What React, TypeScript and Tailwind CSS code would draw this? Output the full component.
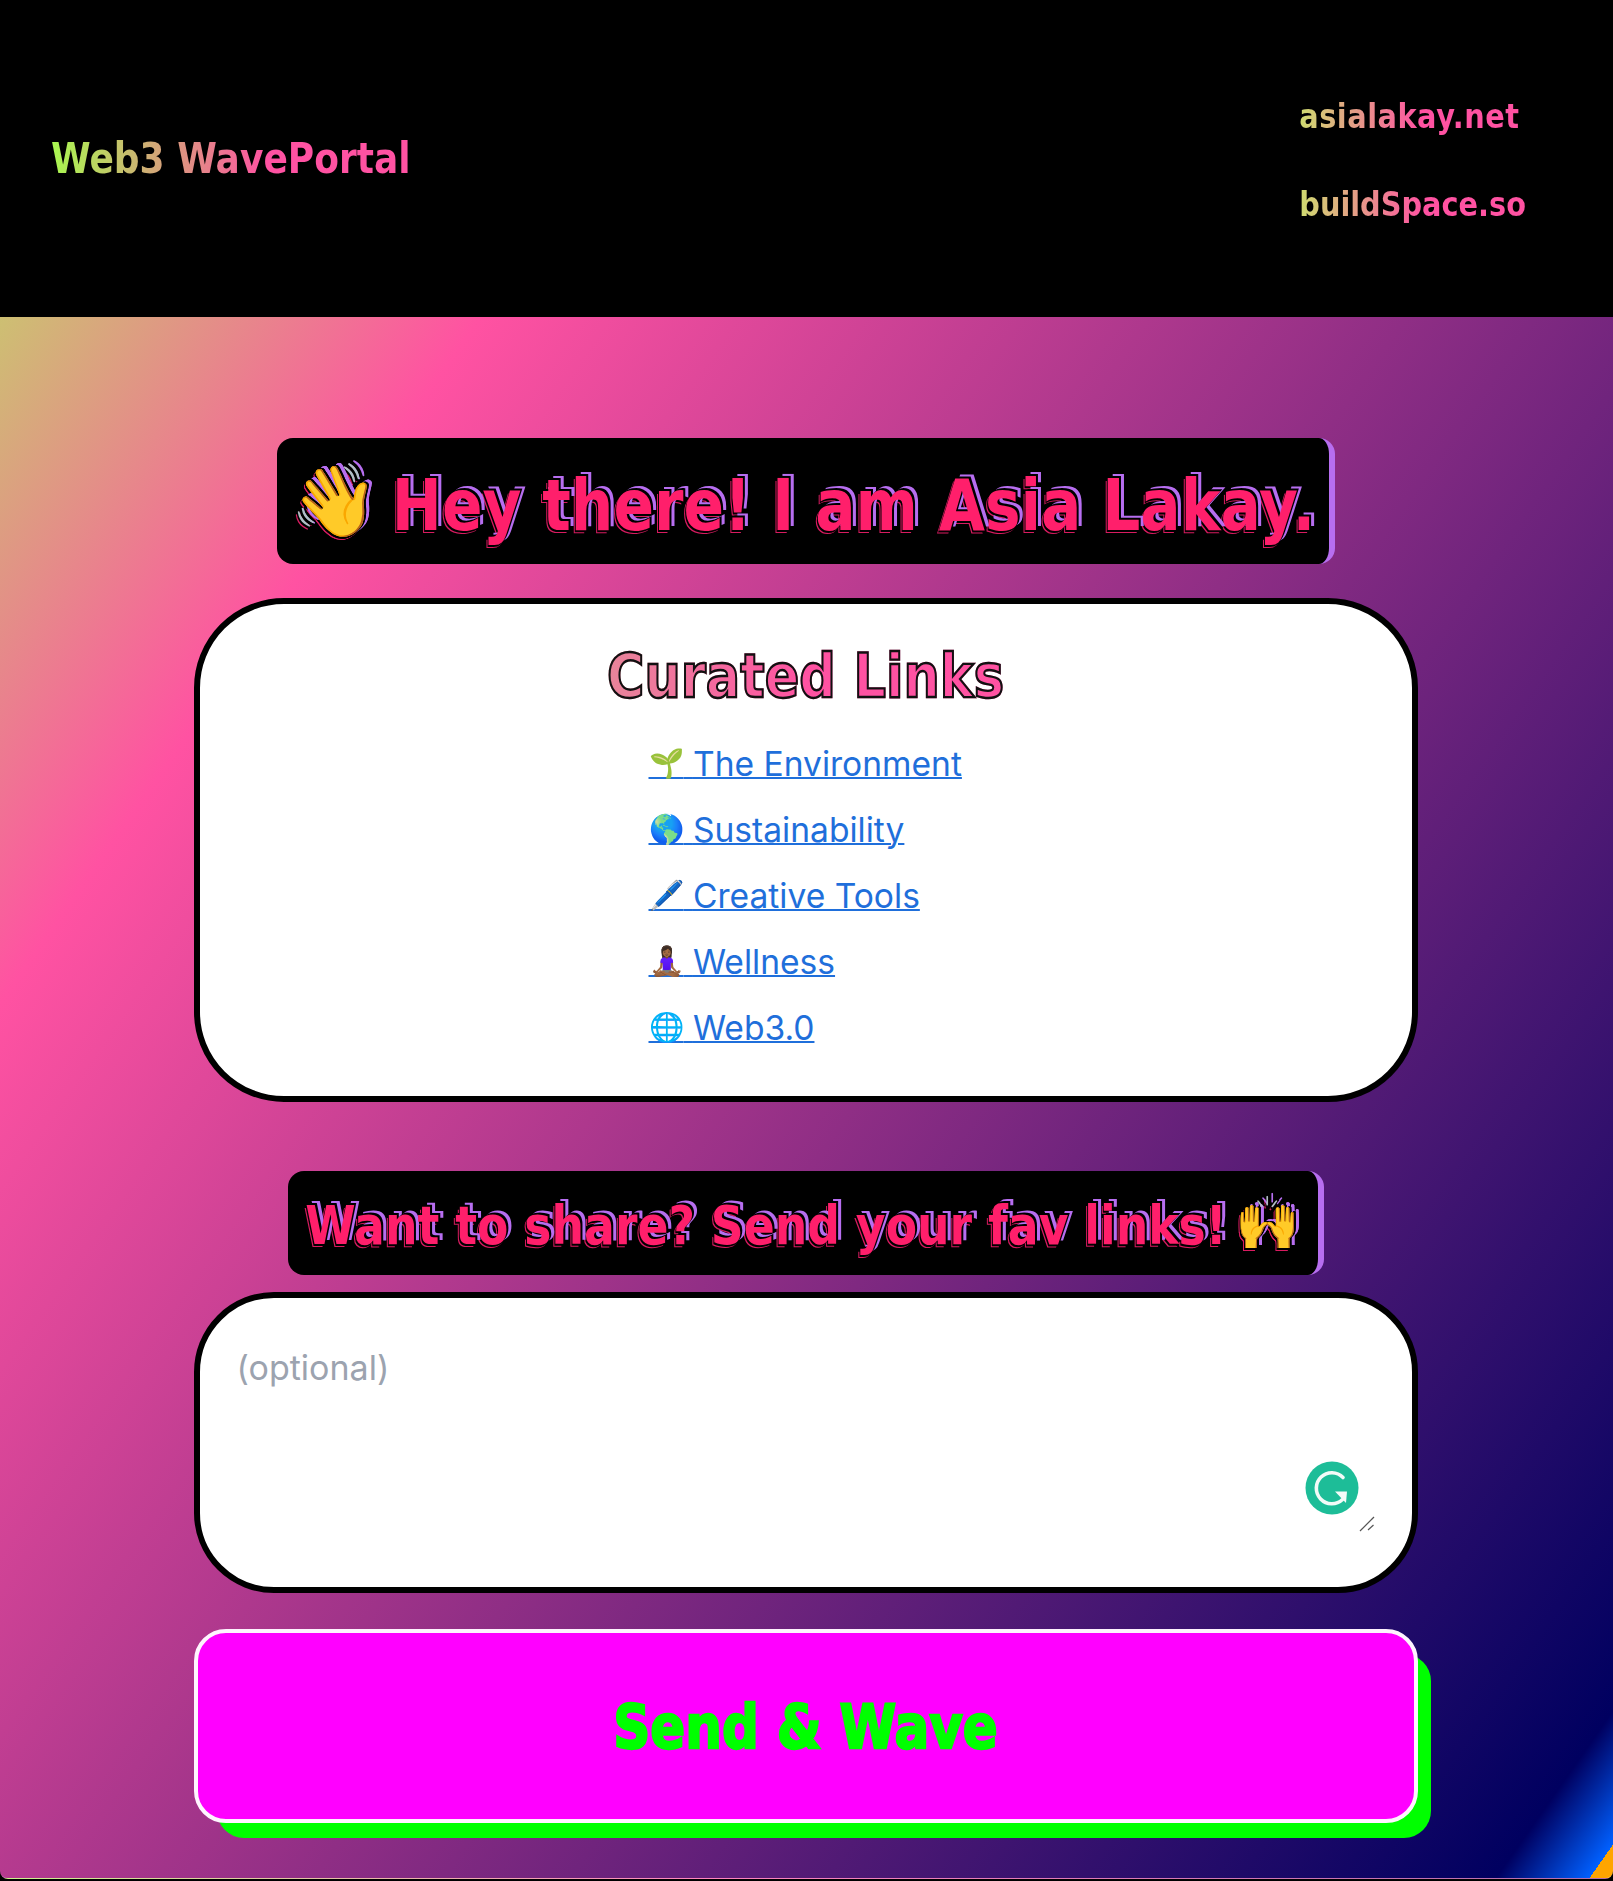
import React from "react";

const display = "font-['DejaVu_Sans','Liberation_Sans',sans-serif] font-bold";
const stretched = "inline-block scale-y-[1.18]";
const bannerText = "text-[#ff1f6b] whitespace-nowrap [text-shadow:2px_-1px_0_#000,5px_-3px_0_#b76ef0,-1px_2px_0_#000,-2px_3px_0_#d81b60]";
const navLink = "text-[28.8px] leading-[52px] bg-[linear-gradient(90deg,#cfdc70_0%,#ff52a2_55%)] bg-clip-text text-transparent";

const links = [
	{ emoji: "🌱", label: "The Environment" },
	{ emoji: "🌎", label: "Sustainability" },
	{ emoji: "🖊️", label: "Creative Tools" },
	{ emoji: "🧘🏾‍♀️", label: "Wellness" },
	{ emoji: "🌐", label: "Web3.0" },
];

function GrammarlyBadge() {
	return (
		<svg viewBox="0 0 54 54" className="absolute right-[59px] bottom-[78px] w-[54px] h-[54px]">
			<circle cx="27" cy="27" r="26.5" fill="#1dbd98" />
			<path d="M38 16.5 A15.5 15.5 0 1 0 37.5 38.5" fill="none" stroke="#f3fbf8" strokeWidth="3.6" strokeLinecap="round" />
			<path d="M30 30.5 L42 30.5 L41 42 Z" fill="#f3fbf8" />
		</svg>
	);
}

function ResizeHandle() {
	return (
		<svg viewBox="0 0 16 16" className="absolute right-[43px] bottom-[61px] w-[16px] h-[16px]">
			<path d="M1 15 L15 1" stroke="#555" strokeWidth="1.2" />
			<path d="M9 14 L14.5 9" stroke="#555" strokeWidth="1.2" />
		</svg>
	);
}

export default function App() {
	return (
		<div className="bg-black h-[1881px] font-['Inter',sans-serif]">
			<div className="h-[1879px] rounded-b-lg border-b border-white/30 bg-[linear-gradient(125deg,#b6f25c_0%,#ff52a2_24%,#000060_96%,#0060ff_99.2%,#ffa500_99.2%)]">
				<header className="h-[317px] bg-black flex items-center justify-between pl-[51px] pr-[87px] pt-[1px]">
					<span className={`${display} ${stretched} text-[36px] bg-[linear-gradient(90deg,#a9f850_0%,#ff52a2_60%)] bg-clip-text text-transparent`}>
						Web3 WavePortal
					</span>
					<nav className="flex flex-col gap-[36px] mt-[1px]">
						<a className={`${display} ${stretched} ${navLink} w-fit tracking-[0.5px]`}>asialakay.net</a>
						<a className={`${display} ${stretched} ${navLink} w-fit`}>buildSpace.so</a>
					</nav>
				</header>

				<main className="flex flex-col items-center pt-[121px] pr-[2px]">
					<h1 className={`${display} ${bannerText} h-[126px] w-[1058px] flex items-center justify-center gap-[14px] bg-black rounded-2xl border-r-[6px] border-[#b76ef0] text-[59.8px]`}>
						<span className="text-[71px]">👋</span>
						<span className={`${stretched} mt-[9px]`}>Hey there! I am Asia Lakay.</span>
					</h1>

					<section className="mt-[34px] w-[1224px] h-[504px] bg-white rounded-[90px] border-[6px] border-black flex flex-col items-center pt-[37px]">
						<h2 className={`${display} ${stretched} text-[51px] leading-[72px] bg-[linear-gradient(90deg,#e8859a_0%,#ff52a2_50%)] bg-clip-text text-transparent [-webkit-text-stroke:2px_#111]`}>
							Curated Links
						</h2>
						<ul className="mt-[26px] w-[314px] flex flex-col gap-[18px]">
							{links.map((link) => (
								<li key={link.label} className="h-[48px] leading-[48px] whitespace-nowrap">
									<a className="text-[33.6px] text-[#1f6fdb] underline decoration-2">
										<span className="text-[28.5px] align-[3px]">{link.emoji}</span> {link.label}
									</a>
								</li>
							))}
						</ul>
					</section>

					<h2 className={`${display} ${bannerText} mt-[69px] h-[104px] w-[1036px] flex items-center justify-center gap-[8px] bg-black rounded-2xl border-r-[6px] border-[#b76ef0] text-[45.7px]`}>
						<span className={`${stretched} mt-[6px]`}>Want to share? Send your fav links!</span>
						<span className="text-[52px]">🙌</span>
					</h2>

					<div className="relative mt-[17px] w-[1224px] h-[301px]">
						<textarea
							placeholder="(optional)"
							className="w-full h-full bg-white rounded-[80px] border-[6px] border-black pl-[37px] pt-[46px] text-[34px] leading-[48px] resize-none outline-none placeholder:text-[#9ca3af]"
						/>
						<GrammarlyBadge />
						<ResizeHandle />
					</div>

					<button className={`${display} mt-[36px] pt-[4px] w-[1224px] h-[194px] bg-[#ff00ff] rounded-[32px] border-4 border-[#fff4ff] shadow-[18px_20px_0_-5px_#00ff00] text-[51.5px] text-[#00ff00] [-webkit-text-stroke:2px_#00ff00]`}>
						<span className={stretched}>Send &amp; Wave</span>
					</button>
				</main>
			</div>
		</div>
	);
}
